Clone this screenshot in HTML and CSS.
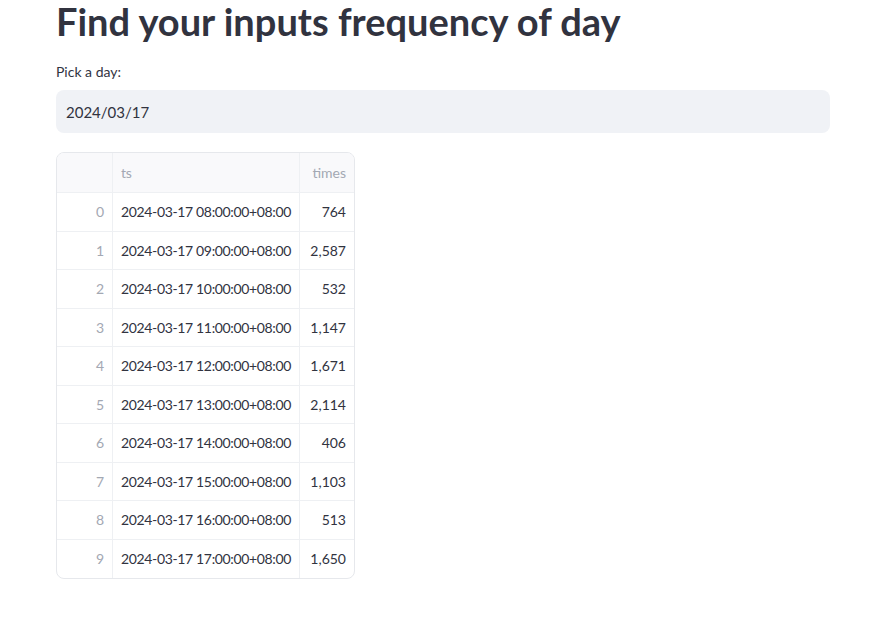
FILE: index.html
```html
<!DOCTYPE html>
<html>
<head>
<meta charset="utf-8">
<link rel="stylesheet" href="styles.css">
</head>
<body>
<main class="main">
  <h1 class="title">Find your inputs frequency of day</h1>
  <div class="field">
    <label class="label">Pick a day:</label>
    <div class="input">2024/03/17</div>
  </div>
  <div class="grid">
    <div class="row head">
      <div class="c idx"></div>
      <div class="c ts">ts</div>
      <div class="c num">times</div>
    </div>
    <div class="row"><div class="c idx">0</div><div class="c ts">2024-03-17 08:00:00+08:00</div><div class="c num">764</div></div>
    <div class="row"><div class="c idx">1</div><div class="c ts">2024-03-17 09:00:00+08:00</div><div class="c num">2,587</div></div>
    <div class="row"><div class="c idx">2</div><div class="c ts">2024-03-17 10:00:00+08:00</div><div class="c num">532</div></div>
    <div class="row"><div class="c idx">3</div><div class="c ts">2024-03-17 11:00:00+08:00</div><div class="c num">1,147</div></div>
    <div class="row"><div class="c idx">4</div><div class="c ts">2024-03-17 12:00:00+08:00</div><div class="c num">1,671</div></div>
    <div class="row"><div class="c idx">5</div><div class="c ts">2024-03-17 13:00:00+08:00</div><div class="c num">2,114</div></div>
    <div class="row"><div class="c idx">6</div><div class="c ts">2024-03-17 14:00:00+08:00</div><div class="c num">406</div></div>
    <div class="row"><div class="c idx">7</div><div class="c ts">2024-03-17 15:00:00+08:00</div><div class="c num">1,103</div></div>
    <div class="row"><div class="c idx">8</div><div class="c ts">2024-03-17 16:00:00+08:00</div><div class="c num">513</div></div>
    <div class="row last"><div class="c idx">9</div><div class="c ts">2024-03-17 17:00:00+08:00</div><div class="c num">1,650</div></div>
  </div>
</main>
</body>
</html>
```
FILE: styles.css
```css
html, body {
  margin: 0;
  padding: 0;
  background: #ffffff;
  color: #31333f;
  font-family: "Lato", "Noto Sans", sans-serif;
}
.main {
  padding: 0 45px 0 56px;
}
.title {
  margin: 0;
  font-size: 38px;
  font-weight: 700;
  line-height: 42px;
}
.field {
  margin-top: 20px;
}
.label {
  display: block;
  font-size: 14px;
  line-height: 20px;
  margin-bottom: 8px;
}
.input {
  height: 43px;
  box-sizing: border-box;
  background: #f0f2f6;
  border-radius: 8px;
  padding: 0 10px;
  display: flex;
  align-items: center;
  font-size: 15px;
}
.grid {
  margin-top: 19px;
  width: 299px;
  border: 1px solid #e6e8ec;
  border-radius: 8px;
  overflow: hidden;
  box-sizing: border-box;
  font-size: 14px;
}
.row {
  display: grid;
  grid-template-columns: 56px 187px 54px;
  height: 38.5px;
  border-bottom: 1px solid #eef0f3;
  box-sizing: border-box;
}
.row.last { border-bottom: none; }
.row.head {
  height: 40px;
  background: #f9f9fb;
  color: #a3a8b3;
}
.c {
  display: flex;
  align-items: center;
  padding: 0 8px;
  border-right: 1px solid #eef0f3;
  white-space: nowrap;
  overflow: hidden;
}
.c.ts { letter-spacing: -0.35px; }
.c.num { border-right: none; justify-content: flex-end; }
.c.idx { justify-content: flex-end; color: #a3a8b3; }
```
